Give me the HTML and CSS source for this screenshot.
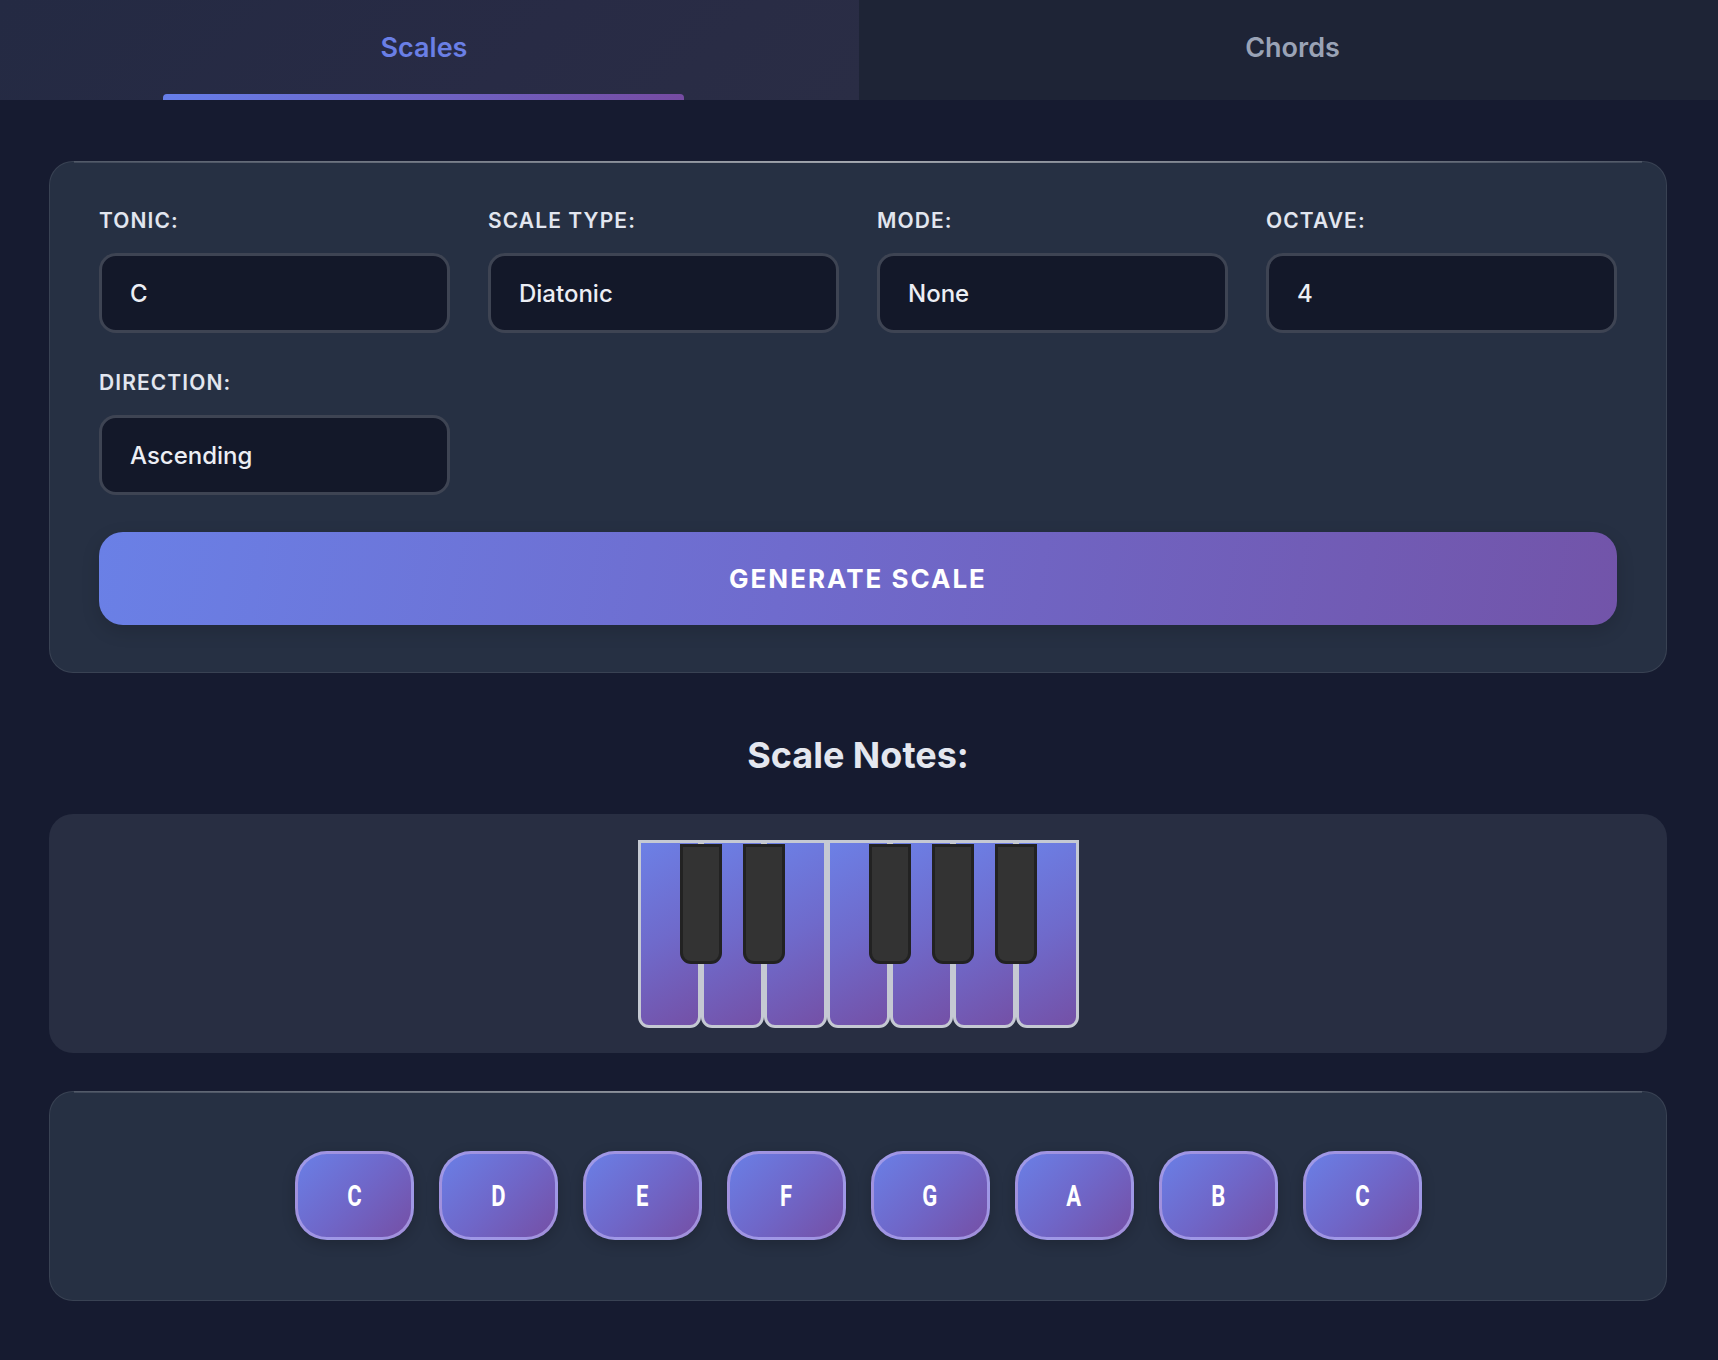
FILE: index.html
```html
<!DOCTYPE html>
<html lang="en">
<head>
<meta charset="utf-8">
<title>Scales</title>
<link rel="stylesheet" href="styles.css">
</head>
<body>
<div class="app">
  <nav class="tabs">
    <div class="tab tab-active">Scales<span class="tab-indicator"></span></div>
    <div class="tab tab-right">Chords</div>
  </nav>
  <main class="main">
    <section class="panel form-panel">
      <div class="form-grid">
        <div class="field">
          <div class="field-label">TONIC:</div>
          <div class="field-input">C</div>
        </div>
        <div class="field">
          <div class="field-label">SCALE TYPE:</div>
          <div class="field-input">Diatonic</div>
        </div>
        <div class="field">
          <div class="field-label">MODE:</div>
          <div class="field-input">None</div>
        </div>
        <div class="field">
          <div class="field-label">OCTAVE:</div>
          <div class="field-input">4</div>
        </div>
        <div class="field">
          <div class="field-label">DIRECTION:</div>
          <div class="field-input">Ascending</div>
        </div>
        <button class="generate-btn">GENERATE SCALE</button>
      </div>
    </section>

    <h2 class="section-title">Scale Notes:</h2>

    <section class="piano-panel">
      <div class="piano">
        <div class="white-key"><span class="black-key"></span></div>
        <div class="white-key"><span class="black-key"></span></div>
        <div class="white-key"></div>
        <div class="white-key"><span class="black-key"></span></div>
        <div class="white-key"><span class="black-key"></span></div>
        <div class="white-key"><span class="black-key"></span></div>
        <div class="white-key"></div>
      </div>
    </section>

    <section class="panel notes-panel">
      <div class="notes">
        <div class="note"><span class="note-name">C</span></div>
        <div class="note"><span class="note-name">D</span></div>
        <div class="note"><span class="note-name">E</span></div>
        <div class="note"><span class="note-name">F</span></div>
        <div class="note"><span class="note-name">G</span></div>
        <div class="note"><span class="note-name">A</span></div>
        <div class="note"><span class="note-name">B</span></div>
        <div class="note"><span class="note-name">C</span></div>
      </div>
    </section>
  </main>
</div>
</body>
</html>
```

FILE: styles.css
```css
* {
  box-sizing: border-box;
}

html, body {
  margin: 0;
  padding: 0;
}

body {
  background: #161b30;
  font-family: Inter, "Noto Sans", "DejaVu Sans", sans-serif;
  color: #e4e7ef;
  min-height: 1360px;
}

.app {
  width: 100%;
}

.tabs {
  display: flex;
  height: 100px;
  background: #1e2436;
}

.tab {
  flex: 0 0 50%;
  position: relative;
  display: flex;
  align-items: center;
  justify-content: center;
  padding-bottom: 5px;
  font-size: 27px;
  font-weight: 600;
  color: #9aa3b6;
}

.tab-active {
  color: #6a7fe6;
  padding-right: 11px;
  background: linear-gradient(135deg, #242a43 0%, #282b45 60%, #2a2d45 100%);
}

.tab-right {
  padding-left: 8px;
}

.tab-indicator {
  position: absolute;
  left: 163px;
  width: 521px;
  bottom: 0;
  height: 6px;
  border-radius: 4px 4px 0 0;
  background: linear-gradient(90deg, #667eea 0%, #764ba2 100%);
}

.main {
  padding: 61px 51px 58px 49px;
}

.panel {
  position: relative;
  background: #263043;
  border: 1px solid rgba(255, 255, 255, 0.09);
  border-radius: 24px;
}

.panel::before {
  content: "";
  position: absolute;
  top: -1px;
  left: 24px;
  right: 24px;
  height: 2px;
  background: linear-gradient(90deg, rgba(255,255,255,0.12) 0%, rgba(255,255,255,0.55) 50%, rgba(255,255,255,0.12) 100%);
}

.form-panel {
  padding: 46px 49px 47px 49px;
}

.form-grid {
  display: grid;
  grid-template-columns: repeat(4, 1fr);
  column-gap: 38px;
  row-gap: 37px;
}

.field {
  display: flex;
  flex-direction: column;
  gap: 19px;
}

.field-label {
  font-size: 21px;
  line-height: 26px;
  font-weight: 600;
  letter-spacing: 1.1px;
  color: #e2e6ef;
}

.field-input {
  height: 80px;
  display: flex;
  align-items: center;
  padding: 0 28px;
  background: #131829;
  border: 3px solid #3e4453;
  border-radius: 17px;
  font-size: 24px;
  font-weight: 500;
  color: #eceef4;
}

.generate-btn {
  grid-column: 1 / -1;
  height: 93px;
  border: none;
  border-radius: 24px;
  background: linear-gradient(100deg, #6a80e6 0%, #6f6bcd 45%, #7254a9 100%);
  color: #ffffff;
  font-family: Inter, "Noto Sans", sans-serif;
  font-size: 26px;
  font-weight: 700;
  letter-spacing: 2px;
  box-shadow: 0 6px 18px rgba(0, 0, 0, 0.15);
  cursor: pointer;
}

.section-title {
  margin: 60px 0 37px;
  text-align: center;
  font-size: 36px;
  line-height: 44px;
  font-weight: 700;
  color: #e4e7ef;
}

.piano-panel {
  background: #282e42;
  border-radius: 24px;
  padding: 26px 0 25px;
  display: flex;
  justify-content: center;
}

.piano {
  display: flex;
  height: 188px;
}

.white-key {
  position: relative;
  width: 63px;
  height: 188px;
  border: 3px solid #c5c9d3;
  border-radius: 0 0 11px 11px;
  background: linear-gradient(150deg, #6c80e6 0%, #6f6acb 50%, #7450a6 100%);
}

.black-key {
  position: absolute;
  z-index: 2;
  top: 1px;
  left: 39px;
  width: 42px;
  height: 120px;
  background: #333333;
  border: 3px solid #222222;
  border-radius: 0 0 11px 11px;
}

.section-title + .piano-panel {
  margin-bottom: 38px;
}

.notes-panel {
  padding: 59px 0 60px;
}

.notes {
  display: flex;
  justify-content: center;
  gap: 25px;
}

.note {
  width: 119px;
  height: 89px;
  display: flex;
  align-items: center;
  justify-content: center;
  border: 3px solid rgba(172, 160, 232, 0.8);
  border-radius: 32px;
  background: linear-gradient(135deg, #6a7fe6 0%, #6f67c9 50%, #754fa5 100%);
  color: #ffffff;
  box-shadow: 0 4px 14px rgba(0, 0, 0, 0.2);
}

.note-name {
  display: inline-block;
  font-family: Roboto, "DejaVu Sans", sans-serif;
  font-size: 29px;
  font-weight: 700;
  transform: scaleX(0.76);
}
```
